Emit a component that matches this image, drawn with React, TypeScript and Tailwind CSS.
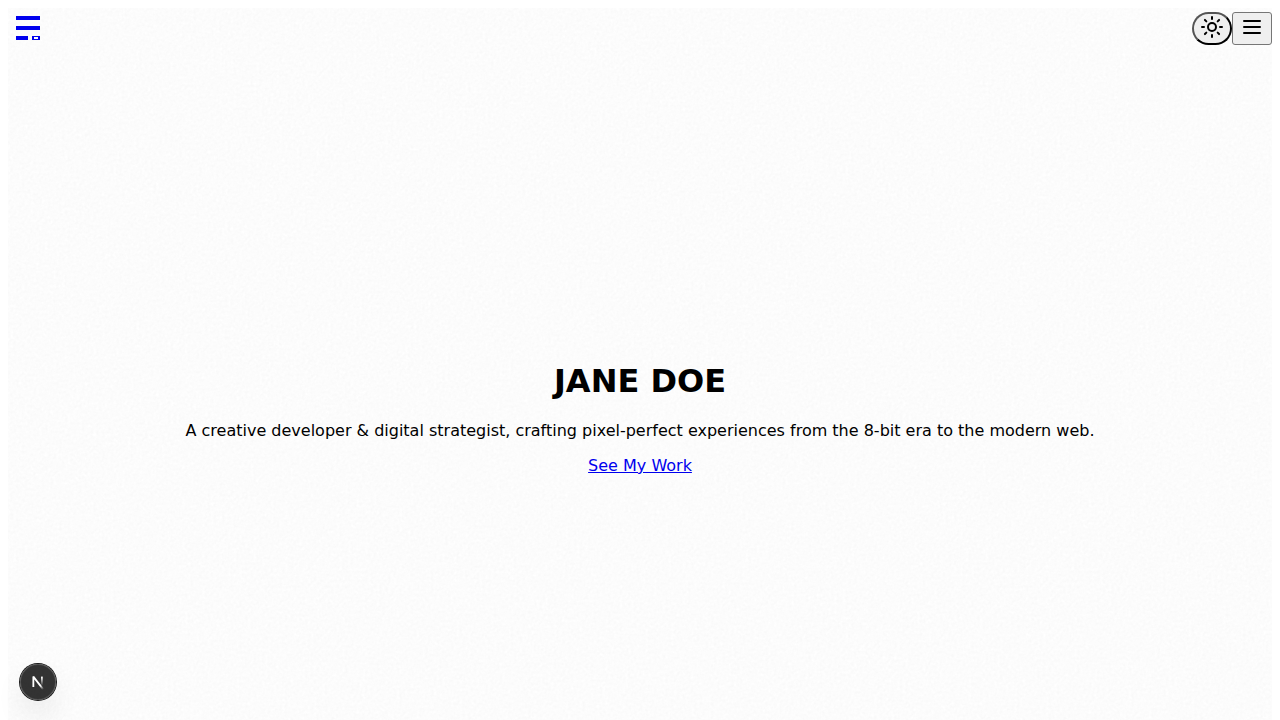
import { Sun } from "lucide-react";

function Grain() {
  return (
    <svg aria-hidden="true" className="pointer-events-none absolute inset-x-2 top-2 bottom-0 -z-10 h-[calc(100%-8px)] w-[calc(100%-16px)]">
      <filter id="grain" x="0" y="0" width="100%" height="100%" colorInterpolationFilters="sRGB">
        <feTurbulence type="fractalNoise" baseFrequency="0.35" numOctaves="3" stitchTiles="stitch" />
        <feColorMatrix values="0.8 0.8 0.8 0 -0.65  0.8 0.8 0.8 0 -0.65  0.8 0.8 0.8 0 -0.65  0 0 0 0 1" />
      </filter>
      <rect width="100%" height="100%" filter="url(#grain)" opacity="0.02" />
    </svg>
  );
}

function Logo() {
  return (
    <svg width="24" height="24" viewBox="0 0 24 24" fill="currentColor" shapeRendering="crispEdges" aria-hidden="true">
      <path d="M0 0h24v4H0zM0 10h24v4H0zM0 20h12v4H0z" />
      <path d="M16 20h8v1h-8zM16 23h8v1h-8zM16 21h2v2h-2zM22 21h2v2h-2z" />
    </svg>
  );
}

function MenuIcon() {
  return (
    <svg width="24" height="24" viewBox="0 0 24 24" fill="none" stroke="currentColor" strokeWidth="2" strokeLinecap="round" aria-hidden="true">
      <path d="M4 6h16M4 12h16M4 18h16" />
    </svg>
  );
}

function DevMark() {
  return (
    <svg width="36" height="36" viewBox="0 0 40 40" fill="none" aria-hidden="true">
      <defs>
        <linearGradient id="diagonal" x1="9.95555" y1="11.1226" x2="15.4778" y2="17.9671" gradientUnits="userSpaceOnUse">
          <stop stopColor="white" />
          <stop offset="0.604" stopColor="white" stopOpacity="0" />
          <stop offset="1" stopColor="white" stopOpacity="0" />
        </linearGradient>
        <linearGradient id="upright" x1="11.8222" y1="1.40039" x2="11.791" y2="11" gradientUnits="userSpaceOnUse">
          <stop stopColor="white" />
          <stop offset="1" stopColor="white" stopOpacity="0" />
        </linearGradient>
      </defs>
      <g transform="translate(12.5 13)" strokeWidth="2">
        <path d="M13.3 15.2L2.34 1V12.6" stroke="url(#diagonal)" strokeLinejoin="bevel" />
        <path d="M11.825 1V12.6" stroke="url(#upright)" />
      </g>
    </svg>
  );
}

export default function App() {
  return (
    <div className="relative isolate flex min-h-screen flex-col bg-white px-2 pt-2 font-['DejaVu_Sans',sans-serif] text-base text-black">
      <Grain />
      <header className="flex h-10 items-center justify-between">
        <a href="#home" aria-label="Home" className="p-2 text-[#0000ee]">
          <Logo />
        </a>
        <div className="flex pt-px">
          <button
            type="button"
            aria-label="Toggle theme"
            className="flex h-[33px] w-10 justify-center rounded-full border-2 border-black bg-[#efefef] pt-px [border-style:outset]"
          >
            <Sun size={24} />
          </button>
          <button
            type="button"
            aria-label="Open menu"
            className="flex h-[33px] w-10 justify-center rounded-[3px] border border-[#767676] bg-[#efefef] pt-0.5"
          >
            <MenuIcon />
          </button>
        </div>
      </header>
      <main id="home" className="flex flex-1 flex-col items-center justify-center pt-12 text-center">
        <h1 className="mt-[22px] text-[32px] leading-[38px] font-bold">JANE DOE</h1>
        <p className="mt-[21px] mb-[15px] leading-5">
          A creative developer &amp; digital strategist, crafting pixel-perfect experiences from the 8-bit era to the modern web.
        </p>
        <a href="#work" className="leading-5 text-[#0000ee] underline">
          See My Work
        </a>
      </main>
      <button
        type="button"
        aria-label="Open developer tools"
        className="fixed bottom-5 left-5 size-9 rounded-full bg-black/80 shadow-[0_0_0_1px_#171717,inset_0_0_0_1px_rgba(255,255,255,0.14),0_16px_32px_-8px_rgba(0,0,0,0.24)]"
      >
        <DevMark />
      </button>
    </div>
  );
}
